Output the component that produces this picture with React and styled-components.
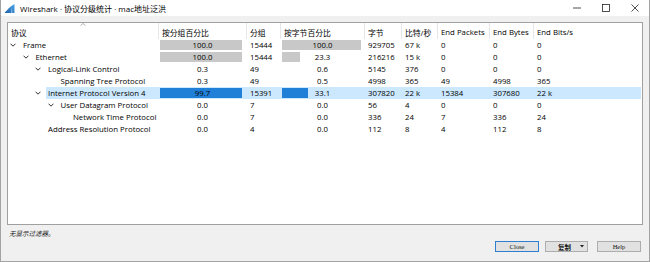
import React from "react";
import styled, { createGlobalStyle } from "styled-components";

const Global = createGlobalStyle`
  html, body { margin: 0; padding: 0; background: #fff; }
  body { font-family: "Open Sans", "Noto Sans CJK SC", sans-serif; }
  * { box-sizing: border-box; }
`;

const COLS = "151px 88px 34px 84px 37px 36px 52px 44px 1fr";

const Window = styled.div`
  width: 650px;
  height: 262px;
  border: 1px solid #a3a3a3;
  border-top: none;
  background: #f0f0f0;
  display: flex;
  flex-direction: column;
  font-family: "Open Sans", "Noto Sans CJK SC", sans-serif;
  color: #000;
`;

const TitleBar = styled.div`
  height: 16px;
  background: #fff;
  display: flex;
  align-items: center;
  padding-left: 3px;
`;

const TitleText = styled.span`
  font-size: 8px;
  margin-left: 5px;
  color: #000;
  flex: 1;
  white-space: nowrap;
`;

const CtrlBtn = styled.div`
  width: 29px;
  height: 16px;
  display: flex;
  align-items: center;
  justify-content: center;
`;

const Body = styled.div`
  flex: 1;
  display: flex;
  flex-direction: column;
  padding: 6px 6px 0 6px;
`;

const TreeBox = styled.div`
  height: 203px;
  background: #fff;
  border: 1px solid #a0a0a0;
  display: flex;
  flex-direction: column;
`;

const HeaderRow = styled.div`
  display: grid;
  grid-template-columns: ${COLS};
  height: 16px;
`;

const HeadCell = styled.div`
  position: relative;
  font-size: 7.8px;
  padding-left: 3px;
  display: flex;
  align-items: center;
  padding-top: 2px;
  border-right: 1px solid #e6e6e6;
  white-space: nowrap;
  &:last-child { border-right: none; }
`;

const SortMark = styled.svg`
  position: absolute;
  left: 72px;
  top: 0;
`;

const Row = styled.div`
  display: grid;
  grid-template-columns: ${COLS};
  height: 12px;
  font-size: 7.8px;
  line-height: 12px;
`;

const TreeCell = styled.div`
  display: flex;
  align-items: center;
  padding-left: ${(p) => p.$level * 12.5}px;
  white-space: nowrap;
`;

const Toggle = styled.div`
  width: 15px;
  flex: none;
  display: flex;
  align-items: center;
  padding-left: 2px;
  height: 12px;
`;

const Label = styled.div`
  flex: 1;
  margin-left: -2px;
  padding-left: 2px;
  height: 12px;
  background: ${(p) => (p.$sel ? "#cce8ff" : "transparent")};
`;

const Cell = styled.div`
  padding-left: 3px;
  white-space: nowrap;
  background: ${(p) => (p.$sel ? "#cce8ff" : "transparent")};
  margin-right: ${(p) => (p.$last ? "1px" : "0")};
`;

const BarCell = styled.div`
  padding: 1px 2px 1px 1px;
  background: ${(p) => (p.$sel ? "#cce8ff" : "transparent")};
`;

const BarTrack = styled.div`
  position: relative;
  height: 10px;
  display: flex;
  align-items: center;
  justify-content: center;
  line-height: 10px;
`;

const BarFill = styled.div`
  position: absolute;
  left: 0;
  top: 0;
  bottom: 0;
  background: ${(p) => (p.$sel ? "#2080d8" : "#c8c8c8")};
`;

const BarText = styled.span`
  position: relative;
`;

const StatusLine = styled.div`
  height: 16px;
  padding-top: 5px;
  padding-left: 2px;
  font-size: 6.5px;
  line-height: 8px;
  font-style: italic;
  color: #222;
`;

const ButtonRow = styled.div`
  display: flex;
  justify-content: flex-end;
  margin-right: 2px;
  height: 11px;
`;

const Button = styled.div`
  width: ${(p) => p.$w}px;
  height: 11px;
  margin-left: ${(p) => p.$gap}px;
  background: #e1e1e1;
  border: 1px solid ${(p) => (p.$def ? "#2f7fd0" : "#adadad")};
  display: flex;
  align-items: center;
  justify-content: center;
  font-family: "Liberation Serif", "Noto Sans CJK SC", serif;
  font-size: 6.5px;
  color: #111;
`;

const CopyLabel = styled.span`
  flex: 1;
  text-align: center;
  font-family: "Noto Sans CJK SC", sans-serif;
  font-weight: 700;
  font-size: 6.5px;
  padding-left: 6px;
`;

const Caret = styled.span`
  width: 10px;
  display: flex;
  justify-content: center;
`;

const rows = [
  { l: 0, n: "Frame", e: true, pp: "100.0", p: 100, k: "15444", bp: "100.0", b: 100, by: "929705", bs: "67 k", ep: "0", eb: "0", es: "0" },
  { l: 1, n: "Ethernet", e: true, pp: "100.0", p: 100, k: "15444", bp: "23.3", b: 23.3, by: "216216", bs: "15 k", ep: "0", eb: "0", es: "0" },
  { l: 2, n: "Logical-Link Control", e: true, pp: "0.3", p: 0.3, k: "49", bp: "0.6", b: 0.6, by: "5145", bs: "376", ep: "0", eb: "0", es: "0" },
  { l: 3, n: "Spanning Tree Protocol", e: false, pp: "0.3", p: 0.3, k: "49", bp: "0.5", b: 0.5, by: "4998", bs: "365", ep: "49", eb: "4998", es: "365" },
  { l: 2, n: "Internet Protocol Version 4", e: true, sel: true, pp: "99.7", p: 99.7, k: "15391", bp: "33.1", b: 33.1, by: "307820", bs: "22 k", ep: "15384", eb: "307680", es: "22 k" },
  { l: 3, n: "User Datagram Protocol", e: true, pp: "0.0", p: 0, k: "7", bp: "0.0", b: 0, by: "56", bs: "4", ep: "0", eb: "0", es: "0" },
  { l: 4, n: "Network Time Protocol", e: false, pp: "0.0", p: 0, k: "7", bp: "0.0", b: 0, by: "336", bs: "24", ep: "7", eb: "336", es: "24" },
  { l: 2, n: "Address Resolution Protocol", e: false, pp: "0.0", p: 0, k: "4", bp: "0.0", b: 0, by: "112", bs: "8", ep: "4", eb: "112", es: "8" },
];

const Chevron = () => (
  <svg width="6" height="4" viewBox="0 0 6 4">
    <path d="M0.5 0.7 L3 3.2 L5.5 0.7" fill="none" stroke="#333" strokeWidth="1" />
  </svg>
);

const Bar = ({ pct, text, sel }) => (
  <BarCell $sel={sel}>
    <BarTrack>
      <BarFill $sel={sel} style={{ width: pct < 1 ? 0 : `${Math.floor(pct * 0.97)}%` }} />
      <BarText>{text}</BarText>
    </BarTrack>
  </BarCell>
);

const SharkFin = () => (
  <svg width="11" height="11" viewBox="0 0 11 11">
    <defs>
      <linearGradient id="fin" x1="0" y1="1" x2="1" y2="0">
        <stop offset="0" stopColor="#1a5fa8" />
        <stop offset="1" stopColor="#4ea6ea" />
      </linearGradient>
    </defs>
    <path d="M0.5 10 C3 7 6 3.5 10.5 1 L10.5 10 Z" fill="url(#fin)" />
    <path d="M7 10 L7.8 4 L8.6 10 Z" fill="#bfe0fa" opacity="0.6" />
  </svg>
);

export default function App() {
  return (
    <>
      <Global />
      <Window>
        <TitleBar>
          <SharkFin />
          <TitleText>Wireshark · 协议分级统计 · mac地址泛洪</TitleText>
          <CtrlBtn>
            <svg width="8" height="2" viewBox="0 0 8 2"><path d="M0 1 H8" stroke="#222" strokeWidth="0.8" /></svg>
          </CtrlBtn>
          <CtrlBtn>
            <svg width="8" height="8" viewBox="0 0 8 8"><rect x="0.5" y="0.5" width="7" height="7" fill="none" stroke="#222" strokeWidth="0.8" /></svg>
          </CtrlBtn>
          <CtrlBtn>
            <svg width="8" height="8" viewBox="0 0 8 8"><path d="M0.5 0.5 L7.5 7.5 M7.5 0.5 L0.5 7.5" stroke="#222" strokeWidth="0.8" /></svg>
          </CtrlBtn>
        </TitleBar>
        <Body>
          <TreeBox>
            <HeaderRow>
              <HeadCell>
                协议
                <SortMark width="6" height="3" viewBox="0 0 6 3">
                  <path d="M0.5 2.5 L3 0.5 L5.5 2.5" fill="none" stroke="#a0a0a0" strokeWidth="0.8" />
                </SortMark>
              </HeadCell>
              <HeadCell>按分组百分比</HeadCell>
              <HeadCell>分组</HeadCell>
              <HeadCell>按字节百分比</HeadCell>
              <HeadCell>字节</HeadCell>
              <HeadCell>比特/秒</HeadCell>
              <HeadCell>End Packets</HeadCell>
              <HeadCell>End Bytes</HeadCell>
              <HeadCell>End Bits/s</HeadCell>
            </HeaderRow>
            {rows.map((r, i) => (
              <Row key={i}>
                <TreeCell $level={r.l}>
                  <Toggle>{r.e && <Chevron />}</Toggle>
                  <Label $sel={r.sel}>{r.n}</Label>
                </TreeCell>
                <Bar pct={r.p} text={r.pp} sel={r.sel} />
                <Cell $sel={r.sel}>{r.k}</Cell>
                <Bar pct={r.b} text={r.bp} sel={r.sel} />
                <Cell $sel={r.sel}>{r.by}</Cell>
                <Cell $sel={r.sel}>{r.bs}</Cell>
                <Cell $sel={r.sel}>{r.ep}</Cell>
                <Cell $sel={r.sel}>{r.eb}</Cell>
                <Cell $sel={r.sel} $last>{r.es}</Cell>
              </Row>
            ))}
          </TreeBox>
          <StatusLine>无显示过滤器。</StatusLine>
          <ButtonRow>
            <Button $w={44} $gap={0} $def>Close</Button>
            <Button $w={43} $gap={6}>
              <CopyLabel>复制</CopyLabel>
              <Caret>
                <svg width="4" height="3" viewBox="0 0 4 3"><path d="M0 0 H4 L2 2.5 Z" fill="#222" /></svg>
              </Caret>
            </Button>
            <Button $w={44} $gap={9}>Help</Button>
          </ButtonRow>
        </Body>
      </Window>
    </>
  );
}
